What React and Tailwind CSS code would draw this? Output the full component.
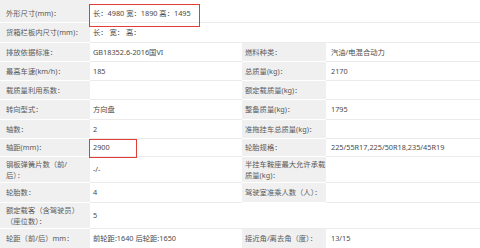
import React from "react";

const rows = [
  { h: "h-[23px] pt-[5px]", l1: "外形尺寸(mm)：", v1: "长：4980 宽：1890 高：1495", span: true },
  { h: "h-[20px]", l1: "货箱栏板内尺寸(mm)：", v1: "长： 宽： 高：", span: true },
  { h: "h-[19px]", l1: "排放依据标准：", v1: "GB18352.6-2016国VI", l2: "燃料种类：", v2: "汽油/电混合动力" },
  { h: "h-[19px]", l1: "最高车速(km/h)：", v1: "185", l2: "总质量(kg)：", v2: "2170" },
  { h: "h-[19px]", l1: "载质量利用系数：", v1: "", l2: "额定载质量(kg)：", v2: "" },
  { h: "h-[20px]", l1: "转向型式：", v1: "方向盘", l2: "整备质量(kg)：", v2: "1795" },
  { h: "h-[19px]", l1: "轴数：", v1: "2", l2: "准拖挂车总质量(kg)：", v2: "" },
  { h: "h-[18px]", l1: "轴距(mm)：", v1: "2900", l2: "轮胎规格：", v2: "225/55R17,225/50R18,235/45R19" },
  { h: "h-[26px]", l1: <>钢板弹簧片数（前/<br />后）：</>, v1: "-/-", l2: "半挂车鞍座最大允许承载质量(kg)：", v2: "" },
  { h: "h-[20px]", l1: "轮胎数：", v1: "4", l2: "驾驶室准乘人数（人）：", v2: "" },
  { h: "h-[26px]", l1: "额定载客（含驾驶员）（座位数）：", v1: "5", span: true },
  { h: "h-[20px]", l1: "轮距（前/后）mm：", v1: "前轮距:1640 后轮距:1650", l2: "接近角/离去角（度）：", v2: "13/15" },
];

const label = "flex items-center bg-[#f0f0f0] border-b border-white leading-[11px]";
const value = "flex items-center bg-white border-b border-[#ebebeb] leading-[11px] text-[#4a4a4a]";

export default function App() {
  return (
    <div
      className="relative w-[480px] h-[248px] overflow-hidden bg-white text-[7.3px] text-[#5a5a5a]"
      style={{ fontFamily: '"Noto Sans", "Noto Sans CJK SC", sans-serif' }}
    >
      {rows.map((r, i) => (
        <div key={i} className={"grid grid-cols-[90px_152px_84px_154px] " + r.h.split(" ")[0]}>
          <div className={label + " pl-[6px] pr-[4px] " + (r.h.split(" ")[1] || "")}>
            <span>{r.l1}</span>
          </div>
          {r.span ? (
            <div className={value + " col-span-3 pl-[3px] " + (r.h.split(" ")[1] || "")}>{r.v1}</div>
          ) : (
            <>
              <div className={value + " pl-[3px]"}>{r.v1}</div>
              <div className={label + " pl-[3px]"}>{r.l2}</div>
              <div className={value + " pl-[5px]"}>{r.v2}</div>
            </>
          )}
        </div>
      ))}

      {/* red annotation boxes */}
      <div className="absolute left-[89px] top-[4px] w-[111px] h-[23px] border-[1.5px] border-[#e33b36]" />
      <div className="absolute left-[89px] top-[139px] w-[48px] h-[19px] border-[1.5px] border-[#e33b36]" />
    </div>
  );
}
